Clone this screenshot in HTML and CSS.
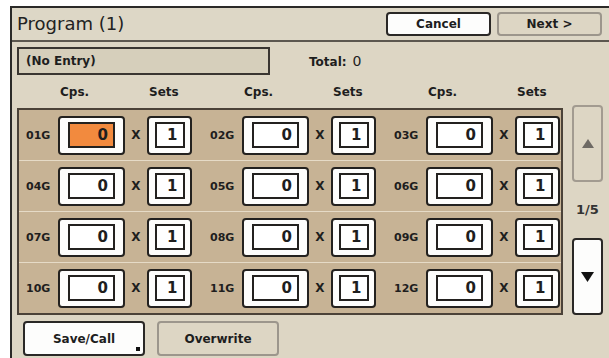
FILE: index.html
```html
<!DOCTYPE html>
<html>
<head>
<meta charset="utf-8">
<link rel="stylesheet" href="styles.css">
</head>
<body>
<div class="screen">
  <div class="header">
    <div class="title">Program (1)</div>
    <div class="hbtns">
      <button class="btn btn-white hbtn">Cancel</button>
      <button class="btn btn-flat hbtn">Next &gt;</button>
    </div>
  </div>
  <div class="info">
    <div class="entry">(No Entry)</div>
    <div class="total"><b>Total:</b> <span class="tval">0</span></div>
  </div>
  <div class="main">
    <div class="left">
      <div class="colheads">
        <div class="group">
          <span class="lbl"></span><span class="ch cps">Cps.</span><span class="xs"></span><span class="ch sets">Sets</span>
        </div>
        <div class="group">
          <span class="lbl"></span><span class="ch cps">Cps.</span><span class="xs"></span><span class="ch sets">Sets</span>
        </div>
        <div class="group">
          <span class="lbl"></span><span class="ch cps">Cps.</span><span class="xs"></span><span class="ch sets">Sets</span>
        </div>
      </div>
      <div class="grid">
        <div class="row">
          <div class="group"><span class="lbl">01G</span><div class="field cpsf"><div class="inner sel">0</div></div><span class="xs">X</span><div class="field setf"><div class="inner">1</div></div></div>
          <div class="group"><span class="lbl">02G</span><div class="field cpsf"><div class="inner">0</div></div><span class="xs">X</span><div class="field setf"><div class="inner">1</div></div></div>
          <div class="group"><span class="lbl">03G</span><div class="field cpsf"><div class="inner">0</div></div><span class="xs">X</span><div class="field setf"><div class="inner">1</div></div></div>
        </div>
        <div class="row">
          <div class="group"><span class="lbl">04G</span><div class="field cpsf"><div class="inner">0</div></div><span class="xs">X</span><div class="field setf"><div class="inner">1</div></div></div>
          <div class="group"><span class="lbl">05G</span><div class="field cpsf"><div class="inner">0</div></div><span class="xs">X</span><div class="field setf"><div class="inner">1</div></div></div>
          <div class="group"><span class="lbl">06G</span><div class="field cpsf"><div class="inner">0</div></div><span class="xs">X</span><div class="field setf"><div class="inner">1</div></div></div>
        </div>
        <div class="row">
          <div class="group"><span class="lbl">07G</span><div class="field cpsf"><div class="inner">0</div></div><span class="xs">X</span><div class="field setf"><div class="inner">1</div></div></div>
          <div class="group"><span class="lbl">08G</span><div class="field cpsf"><div class="inner">0</div></div><span class="xs">X</span><div class="field setf"><div class="inner">1</div></div></div>
          <div class="group"><span class="lbl">09G</span><div class="field cpsf"><div class="inner">0</div></div><span class="xs">X</span><div class="field setf"><div class="inner">1</div></div></div>
        </div>
        <div class="row">
          <div class="group"><span class="lbl">10G</span><div class="field cpsf"><div class="inner">0</div></div><span class="xs">X</span><div class="field setf"><div class="inner">1</div></div></div>
          <div class="group"><span class="lbl">11G</span><div class="field cpsf"><div class="inner">0</div></div><span class="xs">X</span><div class="field setf"><div class="inner">1</div></div></div>
          <div class="group"><span class="lbl">12G</span><div class="field cpsf"><div class="inner">0</div></div><span class="xs">X</span><div class="field setf"><div class="inner">1</div></div></div>
        </div>
      </div>
    </div>
    <div class="scroll">
      <button class="sbtn sbtn-off"><svg width="12" height="9" viewBox="0 0 12 9"><polygon points="6,0 12,9 0,9" fill="#6e6a64"/></svg></button>
      <div class="page">1/5</div>
      <button class="sbtn sbtn-on"><svg width="13" height="10" viewBox="0 0 13 10"><polygon points="0,0 13,0 6.5,10" fill="#111"/></svg></button>
    </div>
  </div>
  <div class="footer">
    <button class="btn btn-white fbtn">Save/Call<span class="dot"></span></button>
    <button class="btn btn-flat fbtn">Overwrite</button>
  </div>
</div>
</body>
</html>
```

FILE: styles.css
```css
* { box-sizing: border-box; }
html, body { margin: 0; padding: 0; background: #ffffff; overflow: hidden; }
body { width: 609px; height: 358px; font-family: "DejaVu Sans", sans-serif; color: #1e1e1e; }

.screen {
  margin: 6px 0 0 10px;
  width: 599px;
  height: 360px;
  border-top: 2px solid #2b2a28;
  border-left: 2px solid #2b2a28;
  background: #ddd6c4;
  display: flex;
  flex-direction: column;
}

.header {
  height: 34px;
  border-bottom: 2px solid #5c574f;
  background: #ddd7c6;
  display: flex;
  align-items: flex-start;
  justify-content: space-between;
  padding: 0 7px 0 5px;
}
.title { font-size: 18px; line-height: 32px; color: #222; }
.hbtns { display: flex; gap: 6px; padding-top: 4px; }

.btn {
  font-family: "DejaVu Sans", sans-serif;
  font-weight: bold;
  font-size: 12px;
  color: #1e1e1e;
  border-radius: 4px;
  padding: 0;
  position: relative;
}
.btn-white { background: #fdfdfc; border: 2px solid #2a2826; }
.btn-flat { background: #ddd6c4; border: 2px solid #9c968c; }
.hbtn { width: 105px; height: 24px; }

.info { display: flex; align-items: center; margin-top: 5px; padding-left: 5px; height: 28px; }
.entry {
  width: 253px; height: 28px;
  border: 2px solid #3a3631;
  background: #d6cfbb;
  font-size: 12px; font-weight: bold;
  line-height: 24px; padding-left: 7px;
}
.total { margin-left: 39px; font-size: 12px; }
.tval { font-size: 14px; margin-left: 2px; }

.main { display: flex; margin-top: 9px; }
.left { padding-left: 5px; }
.colheads { display: flex; gap: 18px; padding-left: 9px; height: 24px; }
.colheads .group { height: 16px; }
.ch { font-size: 12px; font-weight: bold; line-height: 16px; padding-left: 2px; }

.group { display: flex; align-items: center; width: 166px; flex: none; }
.lbl { width: 32px; font-size: 11px; font-weight: bold; flex: none; }
.cps { width: 67px; flex: none; }
.sets { width: 45px; flex: none; }
.xs { width: 22px; text-align: center; font-size: 12px; font-weight: bold; flex: none; }

.grid {
  width: 546px;
  border: 2px solid #4b4238;
  background: #c7b395;
  display: flex;
  flex-direction: column;
}
.row {
  height: 51px;
  display: flex;
  gap: 18px;
  align-items: center;
  padding-left: 7px;
  border-top: 1px solid #e6dbc7;
}
.row:first-child { border-top: none; height: 50px; }

.field {
  height: 39px;
  background: #fdfdfc;
  border: 2px solid #23211f;
  border-radius: 4px;
  display: flex;
  align-items: center;
  justify-content: center;
  flex: none;
}
.cpsf { width: 67px; }
.setf { width: 45px; }
.inner {
  height: 26px;
  border: 2px solid #23211f;
  background: #ffffff;
  font-size: 15px;
  font-weight: bold;
  line-height: 22px;
  text-align: right;
  padding-right: 5px;
}
.cpsf .inner { width: 47px; }
.setf .inner { width: 30px; }
.inner.sel { background: #f28a3e; }

.scroll { margin-left: 9px; padding-top: 21px; display: flex; flex-direction: column; align-items: center; width: 31px; }
.sbtn {
  width: 31px; height: 77px;
  border-radius: 4px;
  padding: 0;
  display: flex; align-items: center; justify-content: center;
}
.sbtn-off { background: #ddd6c4; border: 2px solid #a29b90; }
.sbtn-on { background: #fdfdfc; border: 2px solid #2a2826; height: 77px; }
.page { height: 56px; line-height: 56px; font-size: 13px; font-weight: bold; color: #333; }

.footer { display: flex; gap: 12px; padding-left: 11px; margin-top: 6px; }
.fbtn { width: 122px; height: 35px; }
.dot { position: absolute; right: 3px; bottom: 3px; width: 4px; height: 4px; background: #111; }
```
